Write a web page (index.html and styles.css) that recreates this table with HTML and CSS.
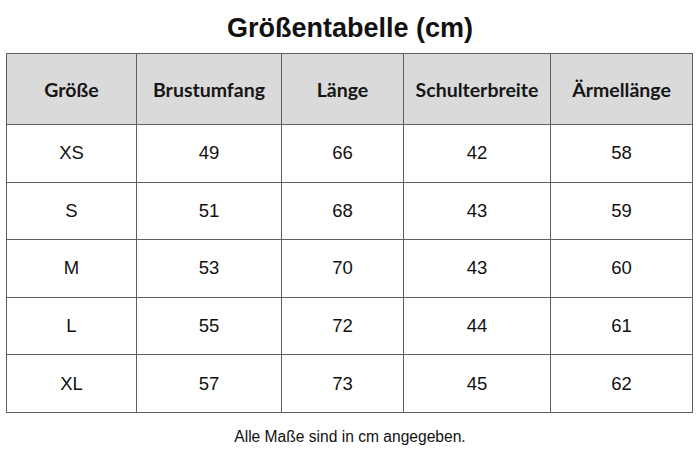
FILE: index.html
```html
<!DOCTYPE html>
<html lang="de">
<head>
<meta charset="utf-8">
<title>Größentabelle</title>
<link rel="stylesheet" href="styles.css">
</head>
<body>
<main class="page">
  <h1 class="title">Größentabelle (cm)</h1>
  <table class="sizes">
    <colgroup>
      <col class="c1"><col class="c2"><col class="c3"><col class="c4"><col class="c5">
    </colgroup>
    <thead>
      <tr><th>Größe</th><th>Brustumfang</th><th>Länge</th><th>Schulterbreite</th><th>Ärmellänge</th></tr>
    </thead>
    <tbody>
      <tr><td>XS</td><td>49</td><td>66</td><td>42</td><td>58</td></tr>
      <tr><td>S</td><td>51</td><td>68</td><td>43</td><td>59</td></tr>
      <tr><td>M</td><td>53</td><td>70</td><td>43</td><td>60</td></tr>
      <tr><td>L</td><td>55</td><td>72</td><td>44</td><td>61</td></tr>
      <tr><td>XL</td><td>57</td><td>73</td><td>45</td><td>62</td></tr>
    </tbody>
  </table>
  <p class="note">Alle Maße sind in cm angegeben.</p>
</main>
</body>
</html>
```
FILE: styles.css
```css
html, body {
  margin: 0;
  padding: 0;
  background: #ffffff;
}
.page {
  width: 700px;
  padding-top: 13px;
  display: flex;
  flex-direction: column;
  align-items: center;
  font-family: "Liberation Sans", Arial, sans-serif;
  color: #111;
}
.title {
  margin: 0 0 10px 0;
  font-size: 27px;
  line-height: 30px;
  font-weight: bold;
  color: #111;
}
.sizes {
  width: 686px;
  margin-left: -1px;
  border-collapse: collapse;
  table-layout: fixed;
}
.c1 { width: 130px; }
.c2 { width: 145px; }
.c3 { width: 122px; }
.c4 { width: 147px; }
.c5 { width: 142px; }
.sizes th, .sizes td {
  border: 1px solid #5f5f5f;
  text-align: center;
  padding: 0;
}
.sizes th {
  height: 70px;
  background: #dadada;
  font-family: Lato, "Open Sans", sans-serif;
  font-weight: 700;
  font-size: 19.5px;
  color: #161616;
}
.sizes td {
  height: 56.6px;
  font-size: 18.5px;
  color: #111;
}
.note {
  margin: 15px 0 0 0;
  font-size: 15.6px;
  line-height: 18px;
  color: #111;
}
```
